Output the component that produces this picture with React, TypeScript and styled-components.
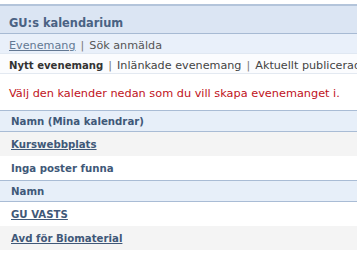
import { createGlobalStyle, styled } from "styled-components";

const GlobalStyle = createGlobalStyle`
  html, body {
    margin: 0;
    padding: 0;
    background: #ffffff;
  }
  body {
    font-family: "DejaVu Sans", Verdana, sans-serif;
    overflow: hidden;
  }
`;

interface Row {
  kind: "head" | "link" | "text";
  label: string;
  shaded?: boolean;
}

const rows: Row[] = [
  { kind: "head", label: "Namn (Mina kalendrar)" },
  { kind: "link", label: "Kurswebbplats", shaded: true },
  { kind: "text", label: "Inga poster funna" },
  { kind: "head", label: "Namn" },
  { kind: "link", label: "GU VASTS" },
  { kind: "link", label: "Avd för Biomaterial", shaded: true },
];

const App = () => {
  return (
    <Page>
      <GlobalStyle />
      <TitleBar>GU:s kalendarium</TitleBar>
      <NavBar>
        <NavLink href="#">Evenemang</NavLink>
        <Sep>|</Sep>
        <span>Sök anmälda</span>
      </NavBar>
      <SubNav>
        <strong>Nytt evenemang</strong>
        <Sep>|</Sep>
        <span>Inlänkade evenemang</span>
        <Sep>|</Sep>
        <span>Aktuellt publicerade evenemang</span>
      </SubNav>
      <Message>Välj den kalender nedan som du vill skapa evenemanget i.</Message>
      <List>
        {rows.map((r, i) =>
          r.kind === "head" ? (
            <HeadRow key={i}>{r.label}</HeadRow>
          ) : (
            <ItemRow key={i} $shaded={r.shaded}>
              {r.kind === "link" ? <ItemLink href="#">{r.label}</ItemLink> : r.label}
            </ItemRow>
          )
        )}
      </List>
    </Page>
  );
};

export default App;

const Page = styled.div`
  width: 357px;
  padding-top: 4px;
`;

const TitleBar = styled.div`
  box-sizing: border-box;
  height: 30px;
  display: flex;
  align-items: center;
  padding: 7px 0 0 9px;
  background-color: #dbe5f3;
  border-top: 2px solid #b3c4da;
  border-bottom: 1px solid #a7bad3;
  color: #4a6283;
  font-size: 11.4px;
  font-weight: bold;
  white-space: nowrap;
`;

const NavBar = styled.div`
  box-sizing: border-box;
  height: 20px;
  display: flex;
  align-items: center;
  padding: 3px 0 0 9px;
  background-color: #e9f0fa;
  border-bottom: 1px solid #e0e8f2;
  color: #555555;
  font-size: 11.2px;
  white-space: nowrap;
`;

const NavLink = styled.a`
  color: #637893;
  text-decoration: underline;
`;

const Sep = styled.span`
  margin: 0 5px;
  color: #777777;
`;

const SubNav = styled.div`
  box-sizing: border-box;
  height: 20px;
  display: flex;
  align-items: center;
  padding: 3px 0 0 9px;
  background-color: #fbfcfe;
  border-bottom: 1px solid #e3e9f1;
  color: #444444;
  font-size: 11.2px;
  white-space: nowrap;

  strong {
    color: #333333;
    font-size: 10.1px;
  }
`;

const Message = styled.p`
  box-sizing: border-box;
  margin: 0;
  padding: 13px 0 0 9px;
  height: 36px;
  color: #c0121b;
  font-size: 11.3px;
  white-space: nowrap;
`;

const List = styled.div`
  font-size: 10.2px;
  font-weight: bold;
  color: #3f5878;
`;

const HeadRow = styled.div`
  height: 20px;
  display: flex;
  align-items: center;
  padding-left: 11px;
  background-color: #e7eff9;
  border-top: 1px solid #a9bcd5;
  border-bottom: 1px solid #a9bcd5;
`;

const ItemRow = styled.div<{ $shaded?: boolean }>`
  height: 24px;
  display: flex;
  align-items: center;
  padding-left: 11px;
  background-color: ${(p) => (p.$shaded ? "#f4f4f4" : "#ffffff")};
`;

const ItemLink = styled.a`
  color: #3f5878;
  text-decoration: underline;
`;
